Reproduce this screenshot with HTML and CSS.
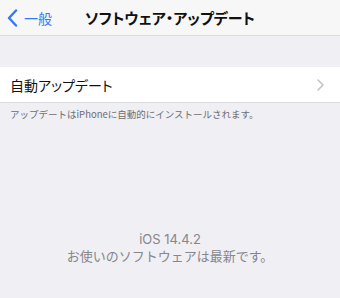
FILE: index.html
```html
<!DOCTYPE html>
<html lang="ja">
<head>
    <meta charset="UTF-8">
    <meta name="viewport" content="width=device-width, initial-scale=1.0">
    <title>ソフトウェア・アップデート</title>
    <link rel="stylesheet" href="styles.css">
</head>
<body>
    <header class="navbar">
        <a class="back" href="#">
            <svg class="back-icon" width="11" height="18" viewBox="0 0 11 18">
                <path d="M9 1.5 L2 9 L9 16.5" fill="none" stroke="#3478f6" stroke-width="2.4" stroke-linecap="round" stroke-linejoin="round"/>
            </svg>
            <span>一般</span>
        </a>
        <h1 class="title">ソフトウェア・アップデート</h1>
    </header>

    <div class="spacer"></div>

    <div class="group">
        <div class="row">
            <span class="row-label">自動アップデート</span>
            <svg class="chevron" width="7" height="12" viewBox="0 0 7 12">
                <path d="M1 1 L6 6 L1 11" fill="none" stroke="#c4c4c7" stroke-width="1.6" stroke-linecap="round" stroke-linejoin="round"/>
            </svg>
        </div>
    </div>
    <p class="footnote">アップデートはiPhoneに自動的にインストールされます。</p>

    <div class="status">
        <p class="version">iOS 14.4.2</p>
        <p class="message">お使いのソフトウェアは最新です。</p>
    </div>
</body>
</html>
```

FILE: styles.css
```css
body {
    margin: 0;
    background-color: #efeff4;
    font-family: "Noto Sans CJK JP", "Noto Sans", sans-serif;
    font-feature-settings: "palt";
    width: 340px;
    height: 298px;
    overflow: hidden;
}

.navbar {
    position: relative;
    height: 35px;
    background-color: #f7f7f8;
    border-bottom: 1px solid #dcdce0;
    display: flex;
    align-items: center;
}

.back {
    display: flex;
    align-items: center;
    gap: 6px;
    padding-left: 7px;
    color: #3478f6;
    text-decoration: none;
    font-size: 14px;
}

.back-icon {
    display: block;
}

.title {
    position: absolute;
    left: 0;
    right: 0;
    top: 0;
    margin: 0;
    line-height: 35px;
    text-align: center;
    font-size: 15px;
    font-weight: 600;
    color: #111;
    pointer-events: none;
}

.spacer {
    height: 31px;
}

.group {
    background: white;
}

.row {
    height: 35px;
    display: flex;
    align-items: center;
    justify-content: space-between;
    padding: 0 16px 0 10px;
    border-bottom: 1px solid #dcdce0;
}

.row-label {
    font-size: 14px;
    color: #111;
}

.footnote {
    margin: 4px 0 0 10px;
    font-size: 9.5px;
    color: #6d6d72;
    font-feature-settings: normal;
}

.status {
    margin-top: 111px;
    text-align: center;
    color: #86868b;
    font-size: 13px;
    font-feature-settings: normal;
}

.status p {
    margin: 0;
}

.status .version {
    font-family: Inter, Roboto, sans-serif;
    line-height: 15px;
}

.status .message {
    line-height: 17px;
}
```
